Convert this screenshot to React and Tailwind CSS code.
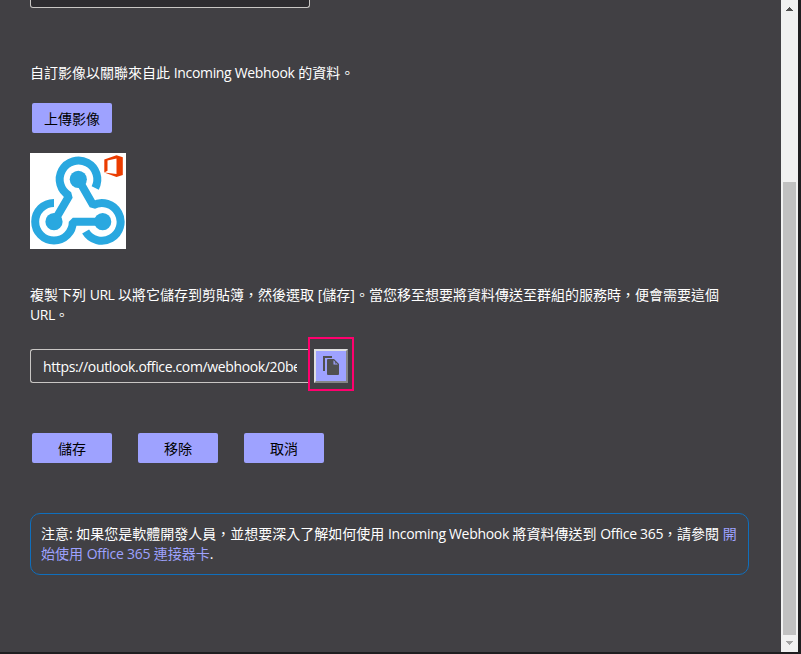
const Latin = ({ children, className = 'tracking-[-0.32px]' }) => (
  <span className={`font-medium ${className}`}>{children}</span>
);

const Button = ({ children }) => (
  <button className="h-[30px] w-20 rounded-[2px] bg-[#9ea2ff] pt-0.5 text-center text-[14px] leading-[28px] text-black">
    {children}
  </button>
);

function WebhookLogo() {
  return (
    <svg className="block size-24 bg-white" viewBox="0 0 96 96">
      <g fill="none" stroke="#29a8e0" strokeWidth="8">
        <path d="M24 68.7 L39.2 42.7 A18.8 18.8 0 1 1 65.2 35" strokeLinejoin="bevel" />
        <path d="M48.3 26.3 L63.2 52.2 A18.8 18.8 0 1 1 55.6 78.4" strokeLinejoin="bevel" />
        <path d="M72.7 68.7 H42.8 A18.8 18.8 0 1 1 24 49.9" strokeLinejoin="bevel" />
      </g>
      <g fill="#29a8e0">
        <circle cx="48.3" cy="26.3" r="8.6" />
        <circle cx="24" cy="68.7" r="8.6" />
        <circle cx="72.7" cy="68.7" r="8.6" />
      </g>
      <path fill="#eb3c00" d="M74.3 6.5 L86.5 2.2 L92.8 4.2 V22 L86.5 24 L74.3 19.5 L86.5 21 V5.5 L77.5 7.6 V17.8 L74.3 19.5 Z" />
    </svg>
  );
}

function CopyIcon() {
  return (
    <svg className="size-[18px] overflow-visible" viewBox="0 0 18 18">
      <path d="M10 0 H2 V14" fill="none" stroke="#505050" strokeWidth="2" />
      <path d="M5 3 Q5 2 6 2 H12 L17 7 V17 Q17 18 16 18 H6 Q5 18 5 17 Z" fill="#505050" />
      <path d="M11.5 3.2 V7.5 H15.8 Z" fill="#9ea2ff" />
      <path d="M12.8 4.6 V6.4 H14.6 Z" fill="#505050" />
    </svg>
  );
}

export default function App() {
  return (
    <div className="flex h-[654px] w-[801px] overflow-hidden bg-[#1f1e20] font-['Open_Sans','Noto_Sans_CJK_TC',sans-serif] text-[14px] leading-5 text-white">
      <main className="h-[652px] w-[781px] bg-[#414044] pl-[30px]">
        <div className="h-2 w-[280px] rounded-b-[3px] border border-t-0 border-[#c8c6c4] bg-[#2d2c30]" />
        <p className="mt-[55px] h-5 whitespace-nowrap">
          自訂影像以關聯來自此 <Latin>Incoming Webhook</Latin> 的資料。
        </p>
        <div className="mt-5 ml-0.5 flex"><Button>上傳影像</Button></div>
        <div className="mt-5"><WebhookLogo /></div>
        <div className="mt-9 h-10 whitespace-nowrap">
          <p>複製下列 <Latin className="tracking-[-0.45px]">URL</Latin> 以將它儲存到剪貼簿，然後選取 [儲存]。當您移至想要將資料傳送至群組的服務時，便會需要這個</p>
          <p><Latin className="tracking-[-0.45px]">URL</Latin>。</p>
        </div>
        <div className="mt-3 flex h-[54px] items-start">
          <div className="mt-3 h-[34px] w-[278px] rounded-l-[3px] border border-r-0 border-[#c8c6c4] pr-[11px] pl-3">
            <div className="overflow-hidden leading-[34px] whitespace-nowrap"><Latin className="tracking-[-0.36px]">https://outlook.office.com/webhook/20be</Latin></div>
          </div>
          <div className="h-[54px] w-[46px] border-2 border-[#ff006e] px-1 pt-2.5">
            <button className="flex size-[34px] items-center justify-center border-2 border-t-[#e0e0e0] border-r-[#858585] border-b-[#858585] border-l-[#e0e0e0] bg-[#9ea2ff]">
              <CopyIcon />
            </button>
          </div>
        </div>
        <div className="mt-[42px] ml-0.5 flex gap-[26px]">
          <Button>儲存</Button>
          <Button>移除</Button>
          <Button>取消</Button>
        </div>
        <div className="mt-[50px] h-[62px] w-[719px] rounded-[10px] border border-[#0f6fbd] px-2.5 pt-2.5 whitespace-nowrap">
          <p>注意: 如果您是軟體開發人員，並想要深入了解如何使用 <Latin>Incoming Webhook</Latin> 將資料傳送到 <Latin>Office 365</Latin>，請參閱 <a className="text-[#9ea2ff]">開</a></p>
          <p><a className="text-[#9ea2ff]">始使用 <span className="tracking-[-0.25px]">Office 365</span> 連接器卡</a>.</p>
        </div>
      </main>
      <aside className="flex h-[652px] w-[17px] flex-col items-center bg-[#f1f1f1]">
        <svg className="h-[182px] w-[17px] shrink-0" viewBox="0 0 17 182" shapeRendering="crispEdges">
          <path d="M8 7h1v1h1v1h1v1h1v1H5v-1h1V9h1V8h1z" fill="#505050" />
        </svg>
        <div className="h-[453px] w-[13px] shrink-0 bg-[#c1c1c1]" />
        <svg className="h-[17px] w-[17px]" viewBox="0 0 17 17" shapeRendering="crispEdges">
          <path d="M5 6h7v1h-1v1h-1v1H9v1H8V9H7V8H6V7H5z" fill="#a3a3a3" />
        </svg>
      </aside>
    </div>
  );
}
